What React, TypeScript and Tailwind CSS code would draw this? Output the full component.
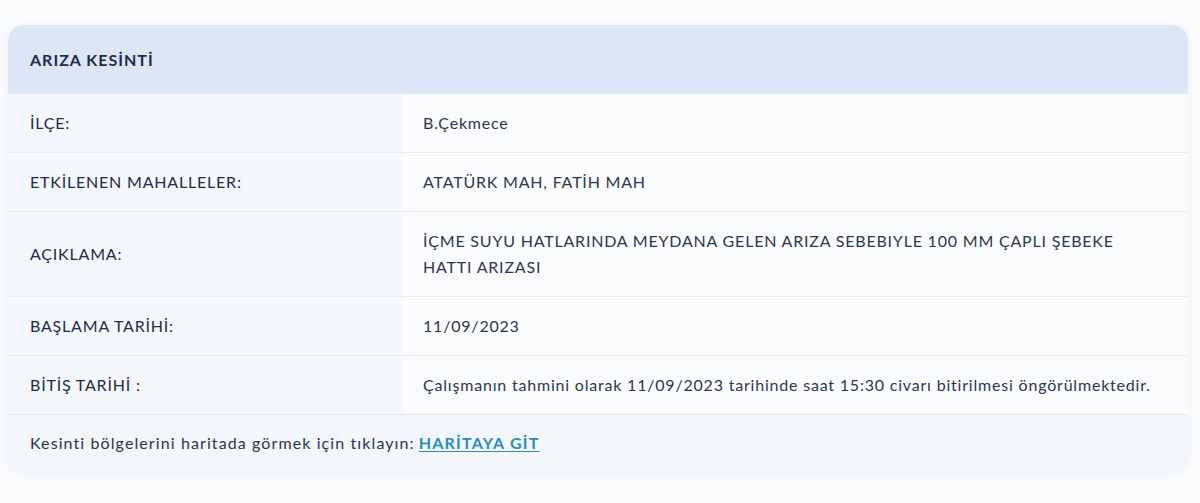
export default function App() {
  const rows = [
    { label: 'İLÇE:', value: 'B.Çekmece' },
    { label: 'ETKİLENEN MAHALLELER:', value: 'ATATÜRK MAH, FATİH MAH' },
    {
      label: 'AÇIKLAMA:',
      value: 'İÇME SUYU HATLARINDA MEYDANA GELEN ARIZA SEBEBIYLE 100 MM ÇAPLI ŞEBEKE HATTI ARIZASI',
    },
    { label: 'BAŞLAMA TARİHİ:', value: '11/09/2023' },
    {
      label: 'BİTİŞ TARİHİ :',
      value: 'Çalışmanın tahmini olarak 11/09/2023 tarihinde saat 15:30 civarı bitirilmesi öngörülmektedir.',
    },
  ];

  return (
    <div className="min-h-[503px] bg-[#fafbfd] pt-[25px] px-2 font-['Lato',_'Noto_Sans',_sans-serif] text-[#1f2b47] tracking-[0.8px]">
      <div className="w-[1180px] rounded-2xl overflow-hidden bg-[#fbfcfe] shadow-[0_2px_10px_rgba(30,50,90,0.06)]">
        <div className="h-[69px] bg-[#dde6f6] flex items-center px-[22px]">
          <h2 className="text-[16px] font-bold tracking-[1px] text-[#1e2c4c]">ARIZA KESİNTİ</h2>
        </div>
        {rows.map((row, index) => (
          <div key={index} className="grid grid-cols-[395px_1fr] border-b border-[#e7ebf1]">
            <div className="bg-[#f4f7fb] flex items-center px-[22px] min-h-[58px] text-[16px]">
              {row.label}
            </div>
            <div className="flex items-center pl-5 py-4 min-h-[58px] text-[16px] leading-[26px] text-[#2c3650]">
              <span className="max-w-[735px]">{row.value}</span>
            </div>
          </div>
        ))}
        <div className="h-[56px] bg-[#f3f6fa] flex items-center px-[22px] text-[16px] tracking-[1.1px] text-[#2a3550]">
          <span>Kesinti bölgelerini haritada görmek için tıklayın:</span>
          <a href="#" className="ml-1 font-bold tracking-[1.2px] text-[#2b8db4] underline underline-offset-2">
            HARİTAYA GİT
          </a>
        </div>
      </div>
    </div>
  );
}
